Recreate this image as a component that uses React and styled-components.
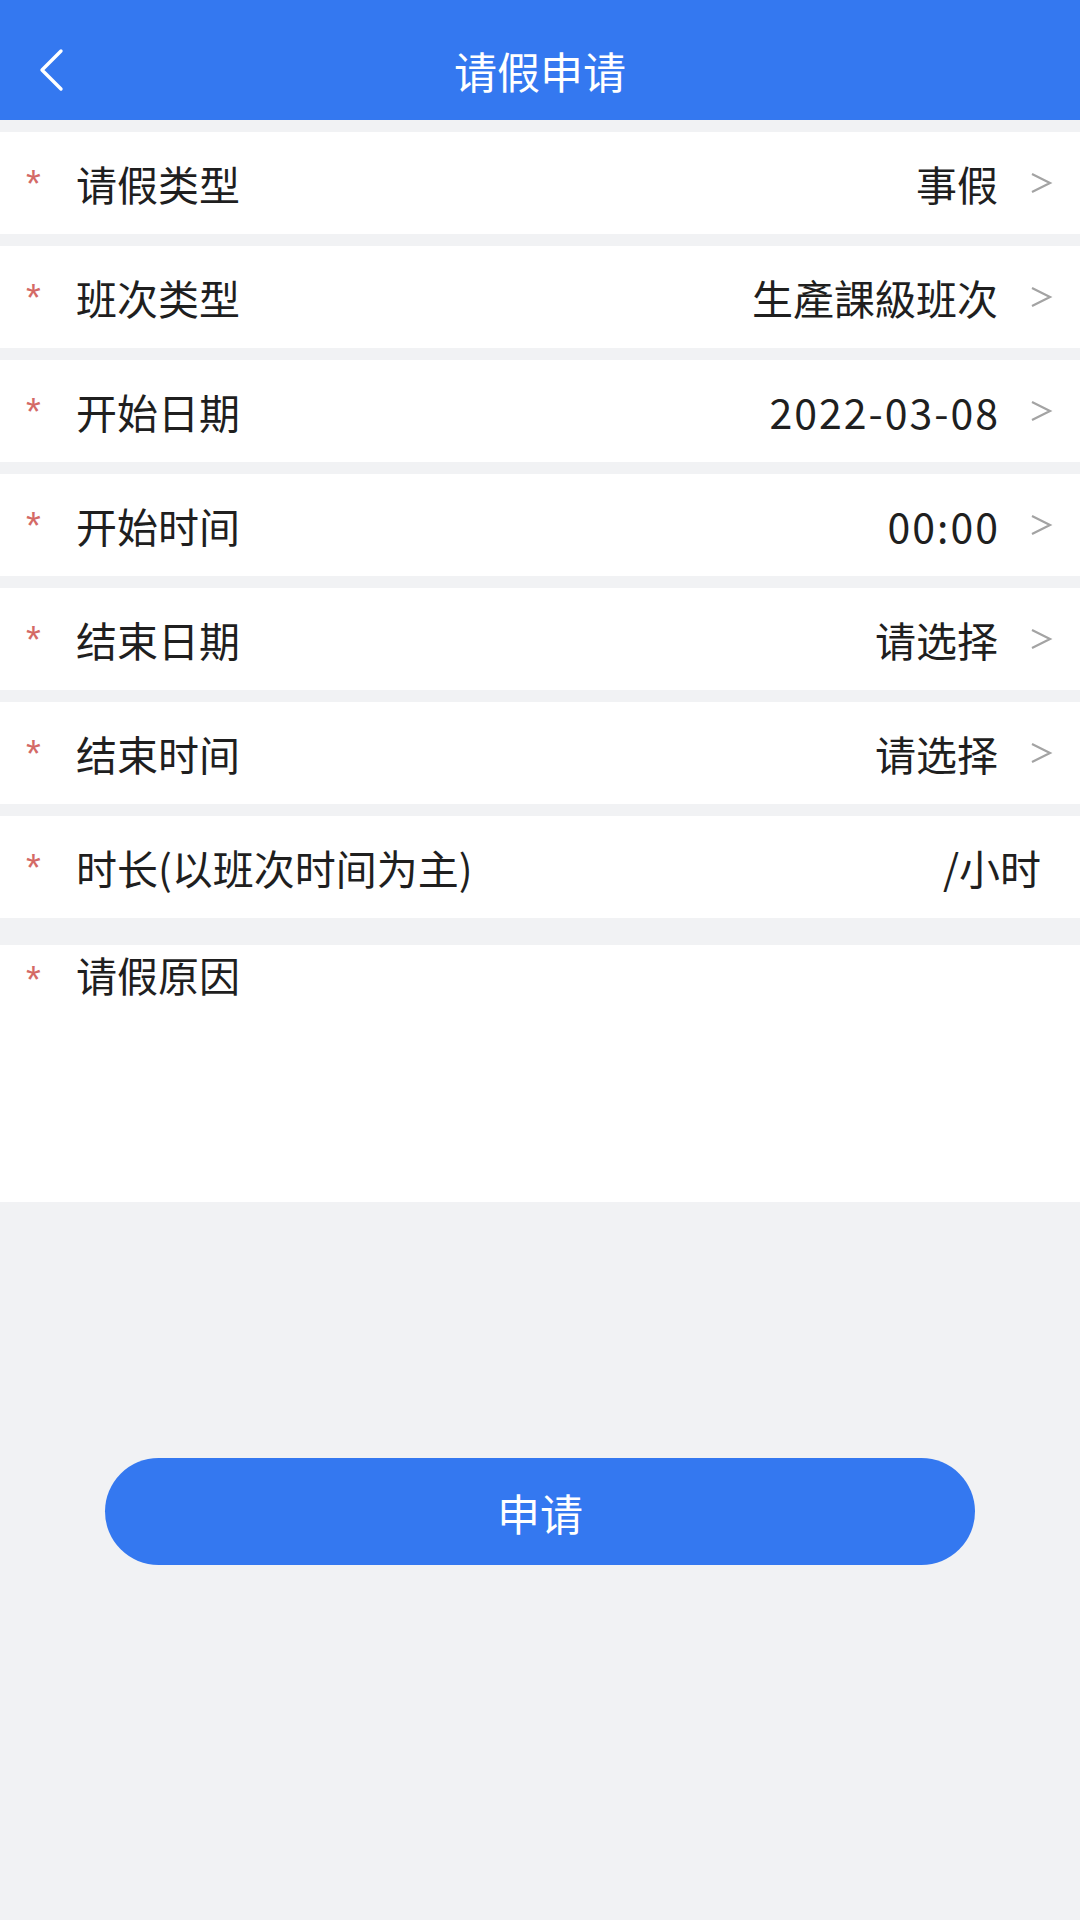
import React from "react";
import styled, { createGlobalStyle } from "styled-components";

const Global = createGlobalStyle`
  html, body { margin: 0; padding: 0; background: #f1f2f4; }
  body { font-family: "Noto Sans CJK SC", "Noto Sans", sans-serif; }
  * { box-sizing: border-box; }
`;

const Page = styled.div`
  min-height: 1920px;
  background: #f1f2f4;
  display: flex;
  flex-direction: column;
`;

const Header = styled.header`
  height: 120px;
  background: #3478f0;
  display: flex;
  align-items: center;
  justify-content: center;
  padding-top: 20px;
  position: relative;
`;

const Back = styled.button`
  position: absolute;
  left: 34px;
  top: 48px;
  width: 34px;
  height: 44px;
  border: 0;
  background: none;
  padding: 0;
  display: flex;
  align-items: center;
  justify-content: center;
`;

const Title = styled.h1`
  margin: 0;
  color: #ffffff;
  font-size: 43px;
  font-weight: 400;
  line-height: 1;
  letter-spacing: 0;
`;

const List = styled.div`
  display: flex;
  flex-direction: column;
  gap: 12px;
  padding-top: 12px;
`;

const Row = styled.div`
  height: 102px;
  background: #ffffff;
  display: flex;
  align-items: center;
  padding: 0 27px 0 26px;
`;

const Star = styled.span`
  color: #d46a66;
  font-family: "Liberation Sans", sans-serif;
  font-size: 38px;
  width: 50px;
  line-height: 1;
  align-self: ${(p) => (p.$top ? "flex-start" : "center")};
  margin-top: ${(p) => (p.$top ? "16px" : "2px")};
`;

const Label = styled.span`
  color: #1f1f1f;
  font-size: 41px;
  line-height: 1;
  flex: 1;
  align-self: ${(p) => (p.$top ? "flex-start" : "center")};
  margin-top: ${(p) => (p.$top ? "9px" : "0")};
`;

const Value = styled.span`
  color: #1f1f1f;
  font-size: 41px;
  line-height: 1;
  letter-spacing: ${(p) => (p.$num ? "2px" : "0")};
  margin-right: ${(p) => (p.$plain ? "12px" : p.$num ? "-2px" : "0")};
`;

const Arrow = styled.svg`
  width: 24px;
  height: 24px;
  margin-left: 31px;
  flex-shrink: 0;
`;

const Reason = styled(Row)`
  height: 257px;
  margin-top: 27px;
  align-items: flex-start;
`;

const ButtonWrap = styled.div`
  display: flex;
  justify-content: center;
  padding-top: 256px;
`;

const Submit = styled.button`
  width: 870px;
  height: 107px;
  border: 0;
  border-radius: 54px;
  background: #3478f0;
  color: #ffffff;
  font-family: "Noto Sans CJK SC", sans-serif;
  font-size: 43px;
  font-weight: 400;
  display: flex;
  align-items: center;
  justify-content: center;
`;

const rows = [
  { label: "请假类型", value: "事假" },
  { label: "班次类型", value: "生產課級班次" },
  { label: "开始日期", value: "2022-03-08", num: true },
  { label: "开始时间", value: "00:00", num: true },
  { label: "结束日期", value: "请选择" },
  { label: "结束时间", value: "请选择" },
  { label: "时长(以班次时间为主)", value: "/小时", plain: true },
];

const Chevron = () => (
  <Arrow viewBox="0 0 24 24">
    <polyline points="3,3 21,12 3,21" fill="none" stroke="#a3a3a3" strokeWidth="2.2" strokeLinejoin="miter" />
  </Arrow>
);

export default function App() {
  return (
    <Page>
      <Global />
      <Header>
        <Back aria-label="返回">
          <svg width="30" height="44" viewBox="0 0 30 44">
            <polyline points="25,3 6,22 25,41" fill="none" stroke="#ffffff" strokeWidth="3.4" strokeLinecap="round" strokeLinejoin="round" />
          </svg>
        </Back>
        <Title>请假申请</Title>
      </Header>
      <List>
        {rows.map((r) => (
          <Row key={r.label}>
            <Star>*</Star>
            <Label>{r.label}</Label>
            <Value $plain={r.plain} $num={r.num}>{r.value}</Value>
            {!r.plain && <Chevron />}
          </Row>
        ))}
      </List>
      <Reason>
        <Star $top>*</Star>
        <Label $top>请假原因</Label>
      </Reason>
      <ButtonWrap>
        <Submit>申请</Submit>
      </ButtonWrap>
    </Page>
  );
}
